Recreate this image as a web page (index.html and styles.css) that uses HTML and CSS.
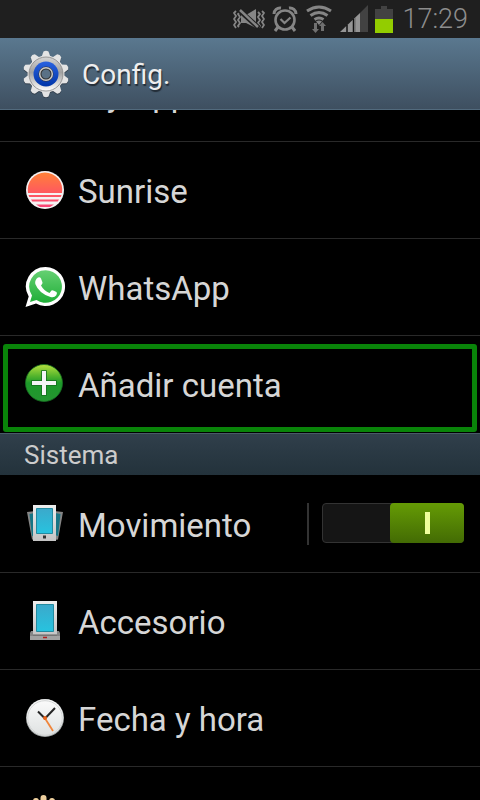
FILE: index.html
```html
<!DOCTYPE html>
<html lang="es">
<head>
<meta charset="utf-8">
<meta name="viewport" content="width=device-width, initial-scale=1">
<title>Config.</title>
<link rel="stylesheet" href="styles.css">
</head>
<body>
<div class="status">
  <svg width="32" height="26" viewBox="0 0 32 26" aria-hidden="true">
    <g fill="none" stroke="#858585" stroke-width="1.800">
      <path d="M3 5l-2 2 2 3-2 3 2 3-2 3 2 3M7 6L5 8l2 3-2 3 2 3-2 3 1 1M29 5l2 2-2 3 2 3-2 3 2 3-2 3M25 6l2 2-2 3 2 3-2 3 2 3-1 1"/>
    </g>
    <path d="M8 9h5l10-6v19l-10-5H8z" fill="#858585"/>
    <path d="M6 4l20 18" stroke="#1f1f1f" stroke-width="5"/>
    <path d="M7 4l18 17" stroke="#858585" stroke-width="2.500"/>
  </svg>
  <svg width="26" height="26" viewBox="0 0 26 26" aria-hidden="true">
    <g fill="none" stroke="#858585">
      <circle cx="13" cy="14" r="9.500" stroke-width="2.600"/>
      <path d="M8.500 13l4 4 6-5.500" stroke-width="2.200"/>
      <path d="M2 8a6 6 0 0 1 7-6M24 8a6 6 0 0 0-7-6" stroke-width="3"/>
      <path d="M6 21l-3 4M20 21l3 4" stroke-width="3"/>
    </g>
  </svg>
  <svg width="28" height="28" viewBox="0 0 28 28" aria-hidden="true">
    <g fill="none" stroke="#858585" stroke-width="3">
      <path d="M2 6q12-8 24 0M5.500 10.500q8.500-6 17 0M9.500 14.500q4.500-3 9 0"/>
    </g>
    <path d="M11 16.500q3-2 6 0l-3 3.500z" fill="#858585"/>
    <path d="M9 18h3v6h2l-3.500 4L7 24h2zM16 26h3v-5h2l-3.500-4-3.500 4h2z" fill="#707070"/>
  </svg>
  <svg width="28" height="28" viewBox="0 0 28 28" aria-hidden="true">
    <path d="M20 8l8-8v27h-8z" fill="#424242"/>
    <path d="M0 27L20 8v19z" fill="#959595"/>
    <path d="M7 20v7M13.500 14v13" stroke="#111" stroke-width="1.500"/>
    <path d="M15 13v14" stroke="#666"/>
  </svg>
  <svg width="18" height="27" viewBox="0 0 18 27" aria-hidden="true">
    <path d="M6 0h6v3h6v10H0V3h6z" fill="#424242"/>
    <path d="M0 13h18v14H0z" fill="#93cd00"/>
  </svg>
  <time class="clock">17:29</time>
</div>

<header class="bar">
  <svg width="48" height="48" viewBox="0 0 48 48" aria-hidden="true">
    <defs>
      <linearGradient id="metal" x1="0" y1="0" x2="0" y2="1"><stop offset="0" stop-color="#d5d5d5"/><stop offset=".45" stop-color="#a0a0a0"/><stop offset="1" stop-color="#fff"/></linearGradient>
      <linearGradient id="blue" x1="0" y1="0" x2="0" y2="1"><stop offset="0" stop-color="#2a62e0"/><stop offset="1" stop-color="#0035a8"/></linearGradient>
      <path id="tooth" d="M19.500 7l2-5.500q2.500-1.500 5 0l2 5.500z"/>
      <g id="gear">
        <use href="#tooth"/><use href="#tooth" transform="rotate(36 24 24)"/><use href="#tooth" transform="rotate(72 24 24)"/><use href="#tooth" transform="rotate(108 24 24)"/><use href="#tooth" transform="rotate(144 24 24)"/><use href="#tooth" transform="rotate(180 24 24)"/><use href="#tooth" transform="rotate(216 24 24)"/><use href="#tooth" transform="rotate(252 24 24)"/><use href="#tooth" transform="rotate(288 24 24)"/><use href="#tooth" transform="rotate(324 24 24)"/>
        <circle cx="24" cy="24" r="18.500"/>
      </g>
    </defs>
    <use href="#gear" fill="#333f4c" transform="translate(0 1)"/>
    <use href="#gear" fill="#e4e4e4"/>
    <circle cx="24" cy="24" r="17" fill="url(#metal)" stroke="#858585" stroke-width=".8"/>
    <circle cx="24" cy="24" r="12.500" fill="url(#blue)"/>
    <circle cx="24" cy="24" r="6" fill="#5a7186" stroke="#333" stroke-width="3"/>
    <circle cx="24" cy="24" r="6.300" fill="none" stroke="#c9c9c9" stroke-width="1.500"/>
  </svg>
  <h1>Config.</h1>
</header>

<main class="scroller">
  <div class="list">
    <a class="row" href="#"><span class="icon"></span>My App</a>
    <a class="row" href="#">
      <svg class="icon" viewBox="0 0 42 42" aria-hidden="true">
        <defs><linearGradient id="sun" x1="0" y1="0" x2="0" y2="1"><stop offset="0" stop-color="#ff8138"/><stop offset=".55" stop-color="#ff5b5d"/><stop offset="1" stop-color="#f94476"/></linearGradient></defs>
        <circle cx="21" cy="21" r="19" fill="#f5f1f2"/>
        <path d="M4 24a17.300 17.300 0 1 1 34 0zM4.500 26h33l-.8 2H5.300zM7 30.500h28l-1.300 2H8.300zM12 35.500h18l-4 2.500H16z" fill="url(#sun)"/>
      </svg>
      Sunrise</a>
    <a class="row" href="#">
      <svg class="icon" viewBox="0 0 42 42" aria-hidden="true">
        <defs><linearGradient id="wa" x1="0" y1="0" x2="0" y2="1"><stop offset="0" stop-color="#65d072"/><stop offset="1" stop-color="#20ae38"/></linearGradient></defs>
        <path d="M21.500 1A19.500 19.500 0 1 1 12 37.500L1.500 41l3.200-10.500A19.500 19.500 0 0 1 21.500 1z" fill="#fff"/>
        <path d="M21.500 4.200a16.300 16.300 0 1 1-9 29.800L6 36l2-6.500A16.300 16.300 0 0 1 21.500 4.200z" fill="url(#wa)"/>
        <path d="M14 11.500q2-1 3 1l1.500 4q.3 1-1.500 3 3 5.500 8.500 7.500l2-2.500q1-.7 5 1.500 1 1-.2 3.300-2 2.700-5.800 1.700Q15 27.500 11.300 18q-.8-4 2.700-6.500z" fill="#fff"/>
      </svg>
      WhatsApp</a>
    <a class="row row-last marked" href="#">
      <svg class="icon" viewBox="0 0 42 42" aria-hidden="true">
        <defs><linearGradient id="add" x1="0" y1="0" x2="0" y2="1"><stop offset="0" stop-color="#b6e03f"/><stop offset=".3" stop-color="#57b62d"/><stop offset=".5" stop-color="#1d9a2a"/><stop offset="1" stop-color="#249530"/></linearGradient></defs>
        <circle cx="20" cy="20" r="18.500" fill="url(#add)" stroke="#176f22" stroke-width=".8"/>
        <path d="M18 8h4v10h10v4H22v10h-4V22H8v-4h10z" fill="#f5f5f5" stroke="#16701e" stroke-width="1.600" paint-order="stroke"/>
      </svg>
      Añadir cuenta</a>

    <h2 class="section">Sistema</h2>

    <div class="row">
      <a class="link" href="#">
        <svg class="icon" viewBox="0 0 42 42" aria-hidden="true">
          <defs>
            <linearGradient id="screen" x1="0" y1="0" x2="0" y2="1"><stop offset="0" stop-color="#3ba9cb"/><stop offset="1" stop-color="#27c3df"/></linearGradient>
            <linearGradient id="case" x1="0" y1="0" x2="0" y2="1"><stop offset="0" stop-color="#eee"/><stop offset="1" stop-color="#c4c4c4"/></linearGradient>
          </defs>
          <path d="M3 9l9-1v29l-4-.5z" fill="#858585"/><path d="M5.500 11l5.500-1v22l-3 1z" fill="#177585"/>
          <path d="M39 9l-9-1v29l4-.5z" fill="#858585"/><path d="M36.500 11L31 10v22l3 1z" fill="#177585"/>
          <path d="M9 2h23v36H9z" fill="url(#case)"/>
          <path d="M12.500 5.500h16v25h-16z" fill="url(#screen)" stroke="#238ba0"/>
          <path d="M19 32.500h3v3h-3z" fill="#333"/>
        </svg>
        Movimiento</a>
      <input class="switch" type="checkbox" role="switch" aria-label="Movimiento" checked>
    </div>
    <a class="row" href="#">
      <svg class="icon" viewBox="0 0 42 42" aria-hidden="true">
        <path d="M7 31h28l1 2v7H6v-7z" fill="#858585"/><path d="M6 36h30v4H6z" fill="#a2a2a2"/>
        <path d="M9 1h24v34H9z" fill="url(#case)"/>
        <path d="M12.500 4.500h17v27h-17z" fill="url(#screen)" stroke="#238ba0"/>
        <path d="M9 35h24" stroke="#666"/><path d="M19 37.500h4" stroke="#b02020" stroke-width="1.500"/>
      </svg>
      Accesorio</a>
    <a class="row" href="#">
      <svg class="icon" viewBox="0 0 42 42" aria-hidden="true">
        <defs><linearGradient id="dial" x1="0" y1="0" x2="0" y2="1"><stop offset="0" stop-color="#fafafa"/><stop offset="1" stop-color="#dfe2e2"/></linearGradient></defs>
        <circle cx="21" cy="21" r="19" fill="#a3a8a8"/>
        <circle cx="21" cy="20.500" r="18.300" fill="#f8f8f8"/>
        <circle cx="21" cy="21" r="17.300" fill="url(#dial)" stroke="#c9cccc" stroke-width=".8"/>
        <path d="M14 14.500l7 7 10-10.500" fill="none" stroke="#262626" stroke-width="2"/>
        <path d="M20.500 20.500l8.500 13.500" stroke="#f0853b" stroke-width="1.800"/>
        <circle cx="21" cy="21" r="2" fill="#e8641c"/>
      </svg>
      Fecha y hora</a>
    <a class="row" href="#" aria-label="Accesibilidad">
      <svg class="icon" viewBox="0 0 42 42" aria-hidden="true">
        <g fill="none" stroke="#edcf9d" stroke-width="6" stroke-linecap="round"><path d="M19.500 4v20M12 7l2 18M28 7l-3 18M35 17l-6 14"/></g>
        <path d="M11 24h18l3 9-8 7h-8l-5-7z" fill="#edcf9d"/>
      </svg>
    </a>
  </div>
</main>
</body>
</html>
```
FILE: styles.css
```css
* {
  box-sizing: border-box;
}

body {
  display: flex;
  flex-direction: column;
  height: 100vh;
  margin: 0;
  overflow: hidden;
  background: #000;
  color: #d6d6d6;
  font-family: Roboto, "Liberation Sans", sans-serif;
}

a {
  color: inherit;
  text-decoration: none;
}

svg {
  display: block;
  flex: none;
}

.status {
  display: flex;
  flex: none;
  align-items: center;
  justify-content: flex-end;
  gap: 7px;
  height: 38px;
  padding-right: 12px;
  background: #1f1f1f;
}

.clock {
  margin-left: 2px;
  color: #8d8d8d;
  font-size: 27px;
  font-weight: 300;
  line-height: 36px;
}

.bar {
  display: flex;
  flex: none;
  align-items: center;
  gap: 12px;
  height: 72px;
  padding-left: 22px;
  border-bottom: 1px solid #526a7d;
  background: linear-gradient(#5a788f, #3e4f60);
}

.bar h1 {
  margin: 2px 0 0;
  color: #eee;
  font-size: 28px;
  font-weight: 400;
  line-height: 36px;
  text-shadow: 1px 2px 1px #222c36;
}

.scroller {
  flex: 1;
  min-height: 0;
  overflow: hidden;
}

/* The list rests partly scrolled under the title bar. */
.list {
  margin-top: -65px;
}

.row {
  position: relative;
  display: flex;
  align-items: center;
  gap: 12px;
  height: 97px;
  padding: 4px 16px 0 24px;
  border-bottom: 1px solid #292929;
  font-size: 33px;
  line-height: 40px;
}

.row-last {
  border-bottom-color: #000;
}

.icon {
  flex: none;
  width: 42px;
  height: 42px;
  margin-bottom: 4px;
}

.link {
  display: flex;
  flex: 1;
  align-items: center;
  gap: 12px;
}

.marked::after {
  position: absolute;
  inset: 8px 3px 0 3px;
  border: 5px solid #098409;
  border-radius: 3px;
  content: "";
}

.section {
  height: 42px;
  margin: 0 0 1px;
  padding-left: 24px;
  border-top: 1px solid #485b68;
  background: linear-gradient(#303f4b, #23323b);
  color: #ccc;
  font-size: 26px;
  font-weight: 400;
  line-height: 42px;
}

.switch {
  position: relative;
  width: 142px;
  height: 40px;
  margin: 0 0 6px;
  appearance: none;
  border: 1px solid #333;
  border-radius: 4px;
  background: #151515;
}

/* Divider between the label and the switch */
.switch::before {
  position: absolute;
  top: -1px;
  left: -16px;
  width: 2px;
  height: 42px;
  background: #333;
  content: "";
}

.switch::after {
  position: absolute;
  inset: -1px -1px -1px auto;
  width: 74px;
  border-radius: 4px;
  background:
    linear-gradient(#efff9c, #efff9c) center / 5px 22px no-repeat,
    linear-gradient(#659b05, #436b04);
  content: "";
}
```
